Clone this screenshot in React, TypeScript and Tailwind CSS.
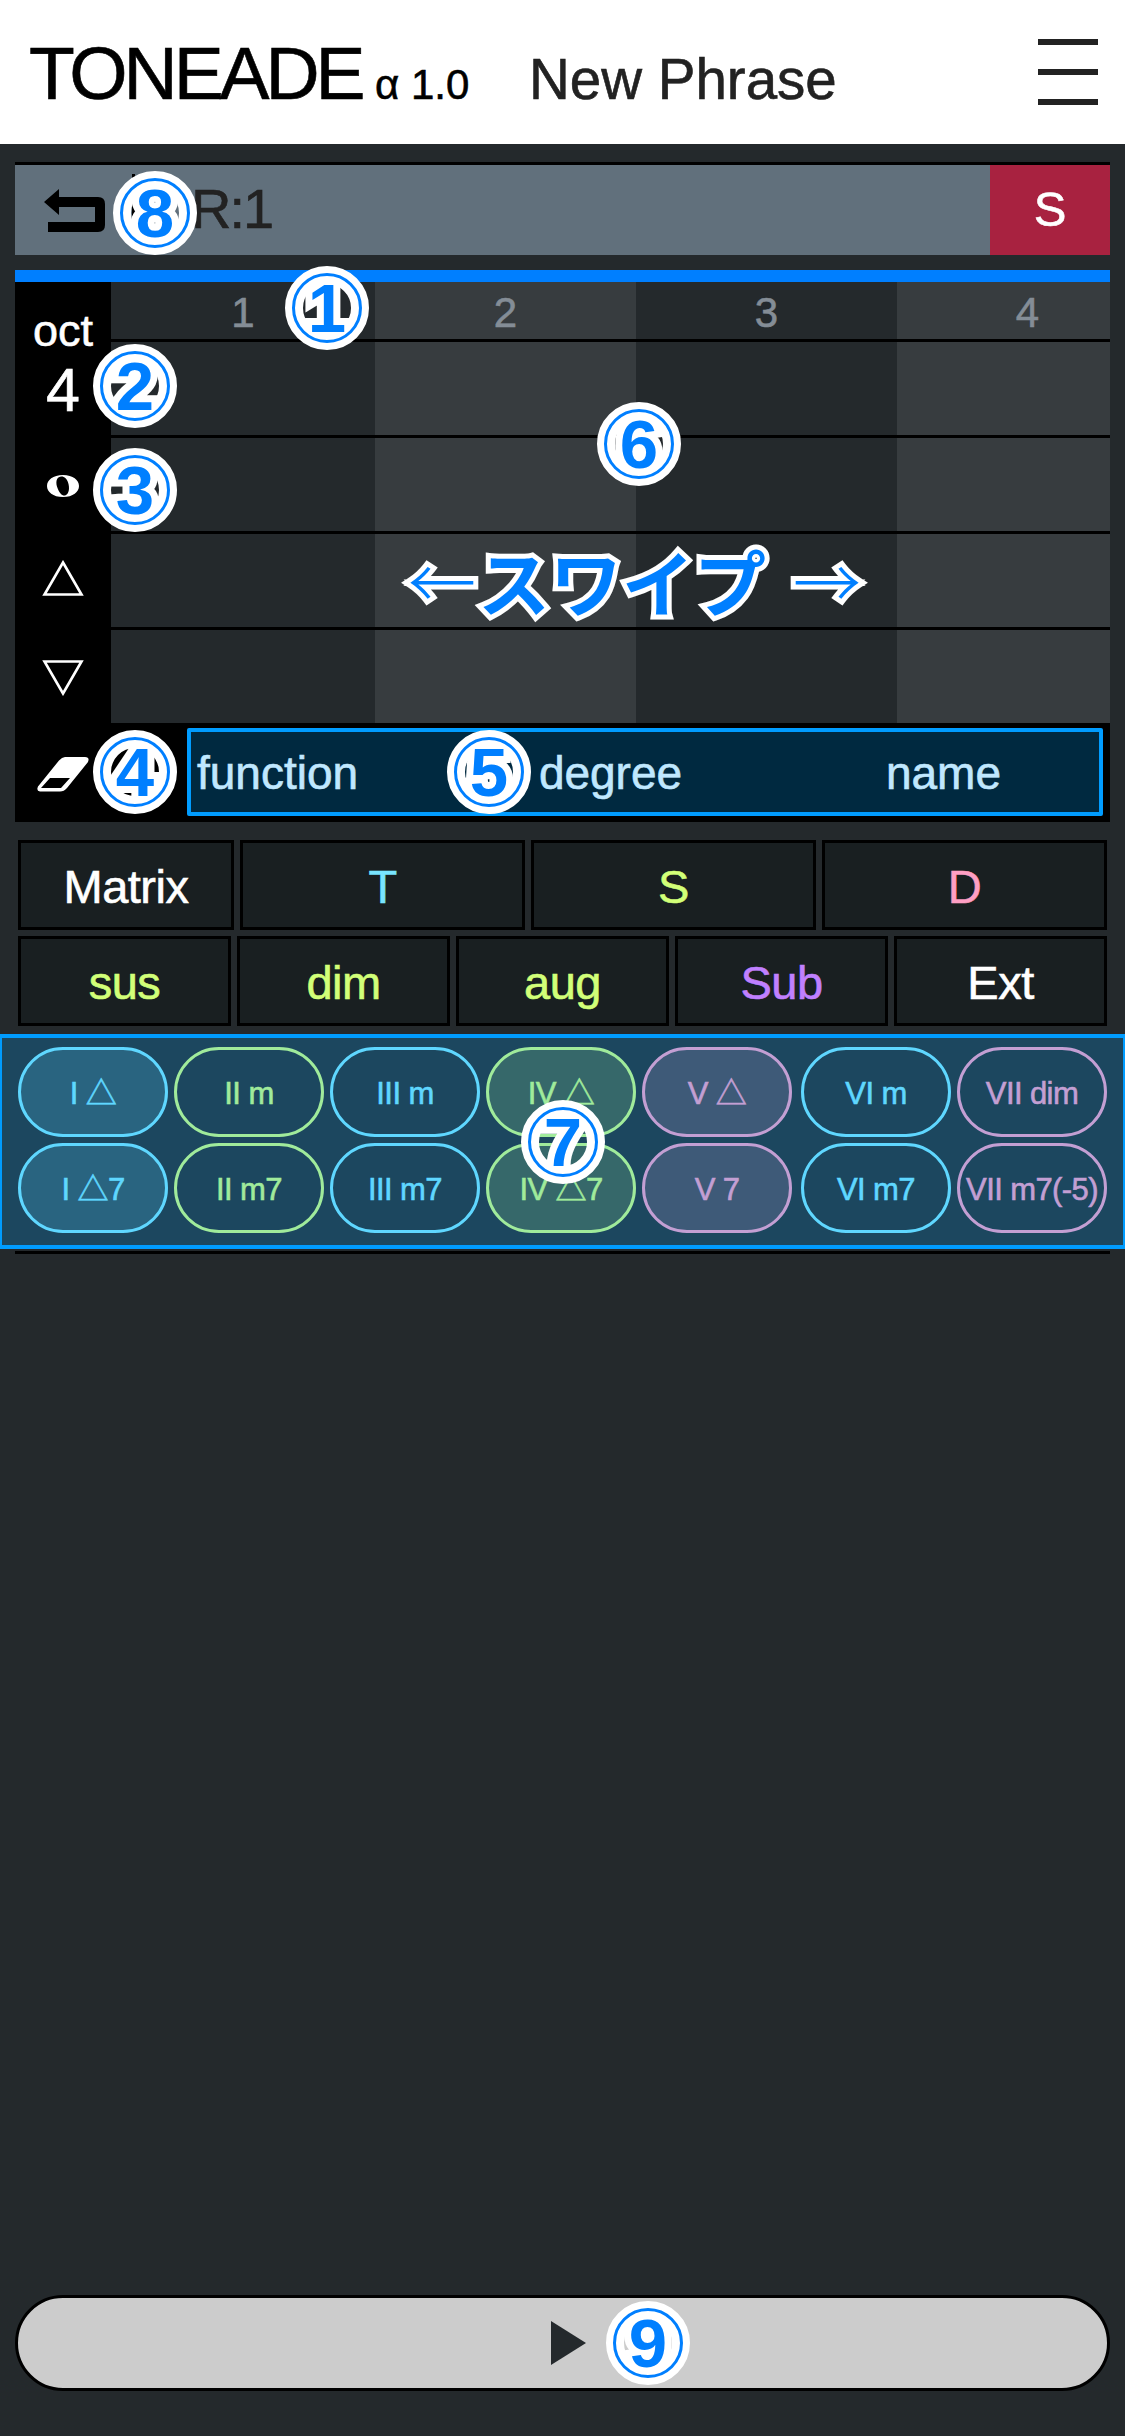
import type { ReactNode } from "react";

const FONT = "font-['Liberation_Sans','Noto_Sans_CJK_JP',sans-serif]";

function Marker({ n, place }: { n: number; place: string }) {
  return (
    <div className={`absolute z-20 size-[84px] ${place}`}>
      <div className="absolute inset-0 rounded-full border-[18px] border-white" />
      <div className="absolute inset-0 flex items-center justify-center text-[69px] leading-none font-bold text-[#007fff] [-webkit-text-stroke:14px_white] [paint-order:stroke_fill] [stroke-linejoin:round]">
        <span>{n}</span>
      </div>
      <div className="absolute inset-[7px] rounded-full border-[3px] border-[#007fff]" />
    </div>
  );
}

function Header() {
  return (
    <header className="flex h-36 items-start bg-white text-black">
      <h1 className="ml-[29px] w-[346px] pt-[31px] text-[75px] leading-[84px] tracking-[-4.1px] whitespace-nowrap">TONEADE</h1>
      <span className="w-[154px] pt-[61px] text-[42px] leading-[48px] whitespace-nowrap">α 1.0</span>
      <span className="pt-[48px] text-[56.5px] leading-[64px] text-[#222] whitespace-nowrap">New Phrase</span>
      <div className="mt-[39px] mr-[27px] ml-auto flex w-[60px] flex-col gap-6">
        <i className="h-1.5 bg-[#222]" />
        <i className="h-1.5 bg-[#222]" />
        <i className="h-1.5 bg-[#222]" />
      </div>
    </header>
  );
}

function TrackBar() {
  return (
    <div className="relative mx-[15px] mt-[18px] flex h-[93px] border-t-[3px] border-black bg-[#61707c]">
      <svg className="mt-6 ml-[29px] h-[45px] w-[62px]" viewBox="0 0 62 45">
        <path d="M0 13 15 0V8H54Q61 8 61 15V36Q61 43 54 43H4V33H51V18H15V26Z" fill="#000" />
      </svg>
      <i className="mt-[9px] ml-[26px] h-[42px] w-[3px] bg-black" />
      <span className="ml-[56px] text-[56px] leading-[87px] tracking-[-2px] text-[#222]">R:1</span>
      <div className="ml-auto flex w-[120px] items-center justify-center bg-[#a82240] text-[49px] text-white">S</div>
      <Marker n={8} place="left-[98px] top-[6px]" />
    </div>
  );
}

const beats = [
  { n: 1, w: "w-[264px]", bg: "bg-[#24292c]" },
  { n: 2, w: "w-[261px]", bg: "bg-[#373c3f]" },
  { n: 3, w: "w-[261px]", bg: "bg-[#24292c]" },
  { n: 4, w: "w-[213px]", bg: "bg-[#373c3f]" },
];

function Grid() {
  return (
    <section className="relative mx-[15px] mt-[15px] flex h-[552px] border-t-[12px] border-[#007fff] bg-black text-white">
      <div className="flex w-24 flex-col items-center">
        <span className="mt-[21px] text-[45px] leading-[56px]">oct</span>
        <span className="text-[61px] leading-[62px]">4</span>
        <svg className="mt-[54px] h-[22px] w-8" viewBox="0 0 32 22">
          <path fillRule="evenodd" fill="#fff" d="M16 0C26 0 32 5 32 11S26 22 16 22 0 17 0 11 6 0 16 0ZM14 1.5C9 2 8.500 8 10.500 13S15 21 18 20.500 23 15 21.500 9 17 1.200 14 1.500Z" />
        </svg>
        <svg className="mt-[63px] h-9 w-[42px]" viewBox="0 0 42 36">
          <path d="M21 2.500 39.500 34.500H2.500Z" fill="none" stroke="#fff" strokeWidth="2.600" />
        </svg>
        <svg className="mt-[64px] h-9 w-[42px]" viewBox="0 0 42 36">
          <path d="M21 33.500 39.500 1.500H2.500Z" fill="none" stroke="#fff" strokeWidth="2.600" />
        </svg>
        <svg className="mt-[61px] h-[35px] w-[52px]" viewBox="0 0 52 35">
          <path fillRule="evenodd" fill="#fff" d="M28 0H48Q53 0 51 5L30 31Q27 34.500 23 34.500H3Q-1 34 1 29.500L22 3.500Q25 0 28 0ZM13 21 4 31H24L33 21Z" />
        </svg>
      </div>
      <div className="flex flex-1 flex-col">
        <div className="flex h-[441px]">
          {beats.map((b) => (
            <div key={b.n} className={`flex flex-col ${b.w}`}>
              <div className={`flex h-[57px] justify-center overflow-hidden text-[42px] leading-[62px] text-[#848d96] ${b.bg}`}>
                <span className={b.n === 4 ? "ml-12" : ""}>{b.n}</span>
              </div>
              {[0, 1, 2, 3].map((r) => (
                <div key={r} className={`h-24 border-t-[3px] border-black ${b.bg}`} />
              ))}
            </div>
          ))}
        </div>
        <div className="grid flex-1 grid-cols-3 text-center text-[46px] leading-[100px]">
          <span>function</span>
          <span>degree</span>
          <span>name</span>
        </div>
      </div>
      <div className="absolute top-[446px] left-[172px] h-[88px] w-[916px] rounded-xs border-[4px] border-[#009cff] bg-[#00a2ff]/25" />
      <div className="absolute top-[244px] left-[391px] flex items-center text-center text-[72px] leading-[108px] font-bold whitespace-pre text-[#007fff] [-webkit-text-stroke:10px_white] [paint-order:stroke_fill] [stroke-linejoin:round] font-['Noto_Sans_CJK_JP',sans-serif]">
        <span className="w-[72px] text-[68px] font-light">←</span>
        <span>スワイプ</span>
        <span className="ml-[25px] w-[72px] text-[68px] font-light">→</span>
      </div>
      <Marker n={1} place="left-[270px] top-[-16px]" />
      <Marker n={2} place="left-[78px] top-[62px]" />
      <Marker n={3} place="left-[78px] top-[166px]" />
      <Marker n={4} place="left-[78px] top-[448px]" />
      <Marker n={5} place="left-[432px] top-[448px]" />
      <Marker n={6} place="left-[582px] top-[120px]" />
    </section>
  );
}

function Key({ color, children }: { color: string; children: ReactNode }) {
  return (
    <button className={`flex h-[90px] items-center justify-center border-[3px] border-black bg-[#191f21] pt-[2px] text-[47px] leading-none tracking-[-0.5px] ${color}`}>
      {children}
    </button>
  );
}

const blue = "border-[#5fd7ff] text-[#5fd7ff]";
const green = "border-[#a0eb9b] text-[#a0eb9b]";
const pink = "border-[#c39fd3] text-[#c39fd3]";
const degrees = [
  { a: "I △", b: "I △7", c: `${blue} bg-[#296480]` },
  { a: "II m", b: "II m7", c: green },
  { a: "III m", b: "III m7", c: blue },
  { a: "IV △", b: "IV △7", c: `${green} bg-[#36686a]` },
  { a: "V △", b: "V 7", c: `${pink} bg-[#3e5a78]` },
  { a: "VI m", b: "VI m7", c: `${blue} ml-[3px]` },
  { a: "VII dim", b: "VII m7(-5)", c: pink },
];

export default function App() {
  return (
    <main className={`flex h-[2436px] w-[1125px] flex-col bg-[#24292c] [-webkit-text-stroke:0.6px] ${FONT}`}>
      <Header />
      <TrackBar />
      <Grid />
      <div className="mt-[18px] grid grid-cols-[216px_285px_285px_285px] gap-1.5 px-[18px]">
        <Key color="text-white">Matrix</Key>
        <Key color="text-[#78e4ff]">T</Key>
        <Key color="text-[#d2ff78]">S</Key>
        <Key color="text-[#ff9fc4]">D</Key>
      </div>
      <div className="mt-1.5 grid grid-cols-5 gap-1.5 px-[18px]">
        <Key color="text-[#d2ff78]">sus</Key>
        <Key color="text-[#d2ff78]">dim</Key>
        <Key color="text-[#d2ff78]">aug</Key>
        <Key color="text-[#c080ff]">Sub</Key>
        <Key color="text-white">Ext</Key>
      </div>
      <section className="relative mt-2 flex h-[215px] gap-1.5 border-x-2 border-y-4 border-[#009cff] bg-[#1c475f] px-4 pt-[9px]">
        {degrees.map((d) => (
          <div key={d.a} className="flex flex-col gap-1.5">
            {[d.a, d.b].map((t) => (
              <button key={t} className={`flex h-[90px] w-[150px] items-center justify-center rounded-full border-[3px] pt-[3px] text-[31px] leading-none tracking-[-0.6px] whitespace-nowrap ${d.c}`}>
                {t}
              </button>
            ))}
          </div>
        ))}
        <Marker n={7} place="left-[519px] top-[62px]" />
      </section>
      <div className="mx-[15px] mt-0.5 h-[3px] bg-black" />
      <div className="relative mx-[15px] mt-auto mb-[45px] flex h-24 items-center rounded-full border-[3px] border-black bg-[#ccc]">
        <svg className="ml-[533px] h-11 w-[35px]" viewBox="0 0 35 44">
          <path d="M0 0 35 22 0 44Z" fill="#24292c" />
        </svg>
        <Marker n={9} place="left-[588px] top-[3px]" />
      </div>
    </main>
  );
}
